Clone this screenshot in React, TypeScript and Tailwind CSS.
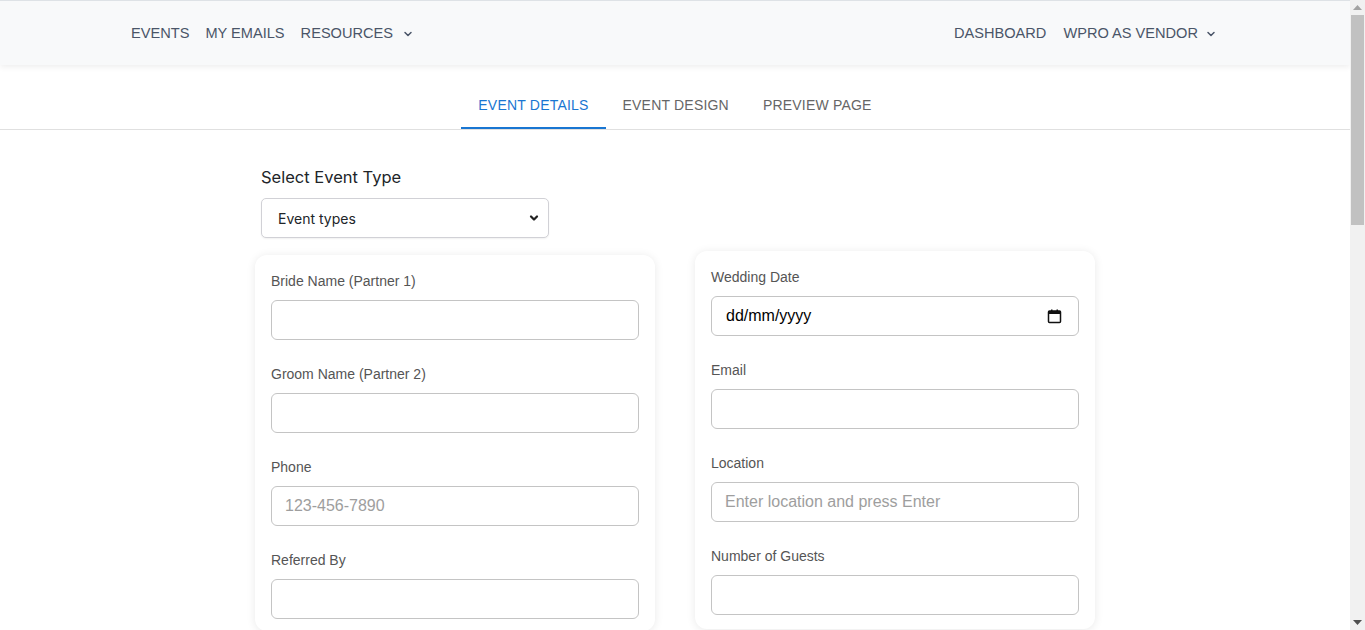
import React from 'react';

const Chevron: React.FC<{ className?: string; width?: number }> = ({ className, width = 2 }) => (
  <svg className={className} viewBox="0 0 16 16" fill="none" stroke="currentColor" strokeWidth={width} strokeLinecap="round" strokeLinejoin="round">
    <path d="M4 6l4 4 4-4" />
  </svg>
);

const CalendarIcon: React.FC = () => (
  <svg width="15" height="15" viewBox="0 0 15 15" fill="none">
    <rect x="1.5" y="2" width="12" height="11.5" rx="1" stroke="#111" strokeWidth="1.5" />
    <rect x="1.5" y="2" width="12" height="3" fill="#111" />
    <rect x="4" y="0.5" width="1.5" height="2.5" fill="#111" />
    <rect x="9.5" y="0.5" width="1.5" height="2.5" fill="#111" />
  </svg>
);

const Field: React.FC<{ label: string; placeholder?: string; last?: boolean; children?: React.ReactNode }> = ({ label, placeholder, last, children }) => (
  <div className={last ? '' : 'mb-6'}>
    <label className="block text-[14px] leading-5 text-[#555] mb-[9px]">{label}</label>
    {children ?? (
      <input
        type="text"
        placeholder={placeholder}
        className="block w-full h-10 rounded-md border border-[#c4c4c4] bg-white px-[13px] text-[16px] text-[#222] placeholder:text-[#9e9e9e] outline-none"
      />
    )}
  </div>
);

// classic browser scrollbar on the right edge
const Scrollbar: React.FC = () => (
  <div className="flex h-screen w-[15px] shrink-0 flex-col bg-[#f1f1f1]">
    <div className="flex h-[15px] items-center justify-center">
      <svg width="9" height="5" viewBox="0 0 9 5"><path d="M4.5 0L9 5H0z" fill="#a3a3a3" /></svg>
    </div>
    <div className="ml-[1px] mr-[1px] h-[210px] bg-[#c1c1c1]" />
    <div className="flex-1" />
    <div className="flex h-[15px] items-center justify-center">
      <svg width="9" height="5" viewBox="0 0 9 5"><path d="M0 0h9L4.5 5z" fill="#505050" /></svg>
    </div>
  </div>
);

const App: React.FC = () => {
  return (
    <div className="flex h-screen overflow-hidden bg-white font-['Liberation_Sans',Arial,sans-serif]">
      <main className="h-screen flex-1 overflow-hidden">
        {/* Top navigation */}
        <nav className="h-[65px] border-t border-[#dee2e6] bg-[#f8f9fa] shadow-[0_2px_6px_rgba(0,0,0,0.07)]">
          <div className="mx-auto flex h-full w-[1100px] items-center justify-between pl-[6px] pr-[8px] pt-[2px] text-[14.6px] text-[#4a5568]">
            <div className="flex items-center gap-[16px]">
              <span>EVENTS</span>
              <span>MY EMAILS</span>
              <span className="flex items-center gap-[9px]">
                RESOURCES
                <Chevron className="w-3 h-3" />
              </span>
            </div>
            <div className="flex items-center gap-[17px]">
              <span>DASHBOARD</span>
              <span className="flex items-center gap-[7px]">
                WPRO AS VENDOR
                <Chevron className="w-3 h-3" />
              </span>
            </div>
          </div>
        </nav>

        {/* Tabs */}
        <div className="mt-4 flex justify-center border-b border-[#e0e0e0] text-[14px] tracking-[0.2px]">
          <button className="relative h-12 px-[17px] text-[#1976d2]">
            EVENT DETAILS
            <span className="absolute bottom-0 left-0 right-0 h-[2px] bg-[#1976d2]" />
          </button>
          <button className="h-12 px-[17px] text-[#666]">EVENT DESIGN</button>
          <button className="h-12 px-[17px] text-[#666]">PREVIEW PAGE</button>
        </div>

        {/* Form */}
        <div className="mx-auto w-[840px] pb-32">
          <div className="ml-[6px] mt-[35px]">
            <h2 className="font-['Inter',sans-serif] text-[16.5px] leading-6 text-[#212529]">Select Event Type</h2>
            <div className="relative mt-[9px] w-[288px]">
              <select className="block h-10 w-full appearance-none rounded-[5px] border border-[#d1d1d6] bg-white pl-4 font-['Inter',sans-serif] text-[14px] text-[#212529] shadow-[0_1px_2px_rgba(0,0,0,0.06)] outline-none">
                <option>Event types</option>
              </select>
              <Chevron width={3} className="pointer-events-none absolute right-[9px] top-[14px] h-3 w-3 text-[#222]" />
            </div>
          </div>

          <div className="mt-[13px] grid grid-cols-2 gap-10 items-start">
            <div className="mt-1 rounded-xl bg-white px-4 pt-4 pb-3 shadow-[0_1px_10px_rgba(0,0,0,0.09)]">
              <Field label="Bride Name (Partner 1)" />
              <Field label="Groom Name (Partner 2)" />
              <Field label="Phone" placeholder="123-456-7890" />
              <Field label="Referred By" last />
            </div>
            <div className="rounded-xl bg-white px-4 pt-4 pb-[14px] shadow-[0_1px_10px_rgba(0,0,0,0.09)]">
              <Field label="Wedding Date">
                <div className="flex h-10 w-full items-center justify-between rounded-md border border-[#c4c4c4] bg-white pl-[14px] pr-4 text-[16px] text-black">
                  <span>dd/mm/yyyy</span>
                  <CalendarIcon />
                </div>
              </Field>
              <Field label="Email" />
              <Field label="Location" placeholder="Enter location and press Enter" />
              <Field label="Number of Guests" last />
            </div>
          </div>

          <div className="mt-10 rounded-xl bg-white p-4 shadow-[0_1px_10px_rgba(0,0,0,0.09)]">
            <Field label="Event Description">
              <textarea className="block h-40 w-full rounded-md border border-[#c4c4c4] p-3 outline-none" />
            </Field>
            <Field label="Budget" />
            <Field label="Venue Name" />
          </div>
        </div>
      </main>
      <Scrollbar />
    </div>
  );
};

export default App;
